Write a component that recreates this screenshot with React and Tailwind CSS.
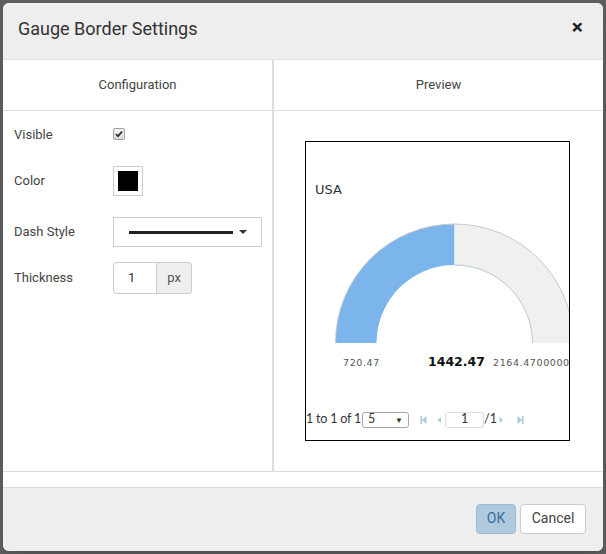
import React from "react";

const font = { fontFamily: "Roboto, 'Liberation Sans', sans-serif" };

const Gauge = () => (
  <svg
    width="263"
    height="298"
    className="absolute top-0 left-0"
    style={{ fontFamily: "'DejaVu Sans', Verdana, sans-serif" }}
  >
    {/* filled part */}
    <path
      d="M 29.5 201 A 119 119 0 0 1 148.5 82 L 148.5 123 A 78 78 0 0 0 70.5 201 Z"
      fill="#7cb5ec"
    />
    {/* remaining part */}
    <path
      d="M 148.5 82 A 119 119 0 0 1 267.5 201 L 226.5 201 A 78 78 0 0 0 148.5 123 Z"
      fill="#f0f0f0"
    />
    <path d="M 29.5 201 A 119 119 0 0 1 267.5 201" fill="none" stroke="#c8c8c8" strokeWidth="1" />
    <path d="M 148.5 123 A 78 78 0 0 1 226.5 201" fill="none" stroke="#b8c8d8" strokeWidth="1" />
    <text x="37" y="224" fontSize="9.5" fill="#555" letterSpacing="0.6">720.47</text>
    <text x="122" y="224" fontSize="12.5" fontWeight="bold" fill="#111">1442.47</text>
    <text x="187" y="224" fontSize="9.5" fill="#555" letterSpacing="0.6">2164.4700000</text>
  </svg>
);

const PagerIcon = ({ d }) => (
  <svg width="7" height="10" viewBox="0 0 7 10" className="shrink-0">
    <path d={d} fill="#a9c9dc" />
  </svg>
);

export default function App() {
  return (
    <div className="w-[606px] h-[554px] bg-[#5e5e5e] p-[3px]" style={font}>
      <div className="w-[600px] h-[548px] bg-white rounded-[6px] overflow-hidden flex flex-col shadow-lg">
        {/* Header */}
        <div className="h-[57px] shrink-0 bg-[#eeeeee] border-b border-[#e0e0e0] flex items-center justify-between pl-[15px] pr-[20px]">
          <h4 className="text-[18px] text-[#333] leading-none -mt-[4px]">Gauge Border Settings</h4>
          <span className="text-[21px] font-bold text-[#222] leading-none -mt-[8px]">×</span>
        </div>

        {/* Columns */}
        <div className="h-[412px] shrink-0 flex border-b border-[#dddddd]">
          {/* Configuration */}
          <div className="w-[271px] shrink-0 border-r-2 border-[#dddddd] flex flex-col">
            <div className="h-[51px] shrink-0 border-b border-[#dddddd] flex items-center justify-center text-[13px] text-[#444]">
              Configuration
            </div>
            <div className="pl-[11px] pt-[12px] text-[13px] text-[#444]">
              <div className="h-[24px] flex items-center">
                <span className="w-[99px]">Visible</span>
                <span className="w-[12px] h-[12px] -mt-[3px] rounded-[2px] border border-[#a0a0a0] bg-gradient-to-b from-[#f4f4f4] to-[#dcdcdc] flex items-center justify-center">
                  <svg width="8" height="8" viewBox="0 0 8 8">
                    <path d="M1 4.2 L3 6.2 L7 1.6" fill="none" stroke="#333" strokeWidth="1.8" />
                  </svg>
                </span>
              </div>
              <div className="h-[30px] mt-[19px] flex items-center">
                <span className="w-[99px]">Color</span>
                <span className="w-[30px] h-[30px] border border-[#cccccc] p-[4px]">
                  <span className="block w-[20px] h-[20px] bg-black" />
                </span>
              </div>
              <div className="h-[30px] mt-[21px] flex items-center">
                <span className="w-[99px]">Dash Style</span>
                <span className="w-[149px] h-[30px] border border-[#cccccc] flex items-center pl-[15px] pr-[14px]">
                  <span className="block w-[104px] h-[3px] bg-[#222]" />
                  <span className="ml-auto w-0 h-0 border-l-[4px] border-r-[4px] border-t-[4px] border-l-transparent border-r-transparent border-t-[#333]" />
                </span>
              </div>
              <div className="h-[32px] mt-[15px] flex items-center">
                <span className="w-[99px]">Thickness</span>
                <span className="w-[44px] h-[32px] border border-[#cccccc] rounded-l-[4px] flex items-center pl-[14px] text-[#333]">
                  1
                </span>
                <span className="w-[35px] h-[32px] border border-l-0 border-[#cccccc] rounded-r-[4px] bg-[#eeeeee] flex items-center justify-center text-[#555]">
                  px
                </span>
              </div>
            </div>
          </div>

          {/* Preview */}
          <div className="flex-1 flex flex-col">
            <div className="h-[51px] shrink-0 border-b border-[#dddddd] flex items-center justify-center text-[13px] text-[#444]">
              Preview
            </div>
            <div className="flex justify-center pt-[30px] pr-[2px]">
              <div className="relative w-[265px] h-[300px] border border-black overflow-hidden flex flex-col">
                <Gauge />
                <div
                  className="ml-[9px] mt-[40px] text-[13px] leading-[16px] text-[#333]"
                  style={{ fontFamily: "'DejaVu Sans', Verdana, sans-serif" }}
                >
                  USA
                </div>
                <div
                  className="mt-auto mb-[11px] flex items-center text-[12.5px] text-[#333]"
                  style={{ fontFamily: "Lato, 'Open Sans', sans-serif" }}
                >
                  <span className="tracking-[-0.2px]">1 to 1 of 1</span>
                  <span className="ml-[1px] w-[47px] h-[16px] border border-[#a6a6a6] rounded-[3px] flex items-center pl-[5px] pr-[5px] text-[12.5px]">
                    5
                    <span className="ml-auto text-[8px] text-[#333]">▼</span>
                  </span>
                  <span className="ml-[11px]">
                    <PagerIcon d="M0.5 1 H2 V9 H0.5 Z M6.5 1 V9 L2 5 Z" />
                  </span>
                  <span className="ml-[9px]">
                    <PagerIcon d="M5 2 V8 L1.5 5 Z" />
                  </span>
                  <span className="ml-[2px] w-[39px] h-[16px] border border-[#dddddd] rounded-[3px] flex items-center justify-center">
                    1
                  </span>
                  <span>/1</span>
                  <span className="ml-[1px]">
                    <PagerIcon d="M1.5 2 V8 L5 5 Z" />
                  </span>
                  <span className="ml-[12px]">
                    <PagerIcon d="M0.5 1 V9 L5 5 Z M5 1 H6.5 V9 H5 Z" />
                  </span>
                </div>
              </div>
            </div>
          </div>
        </div>

        <div className="h-[15px] shrink-0 bg-white" />

        {/* Footer */}
        <div className="h-[64px] shrink-0 bg-[#eeeeee] border-t border-[#dddddd] flex items-center justify-end gap-[4px] pr-[17px] pb-[2px]">
          <button className="w-[40px] h-[30px] rounded-[4px] bg-[#afcadf] border border-[#9dbbd3] text-[14px] text-[#3a6c9c]">
            OK
          </button>
          <button className="w-[66px] h-[30px] rounded-[4px] bg-white border border-[#cccccc] text-[14px] text-[#444]">
            Cancel
          </button>
        </div>
      </div>
    </div>
  );
}
